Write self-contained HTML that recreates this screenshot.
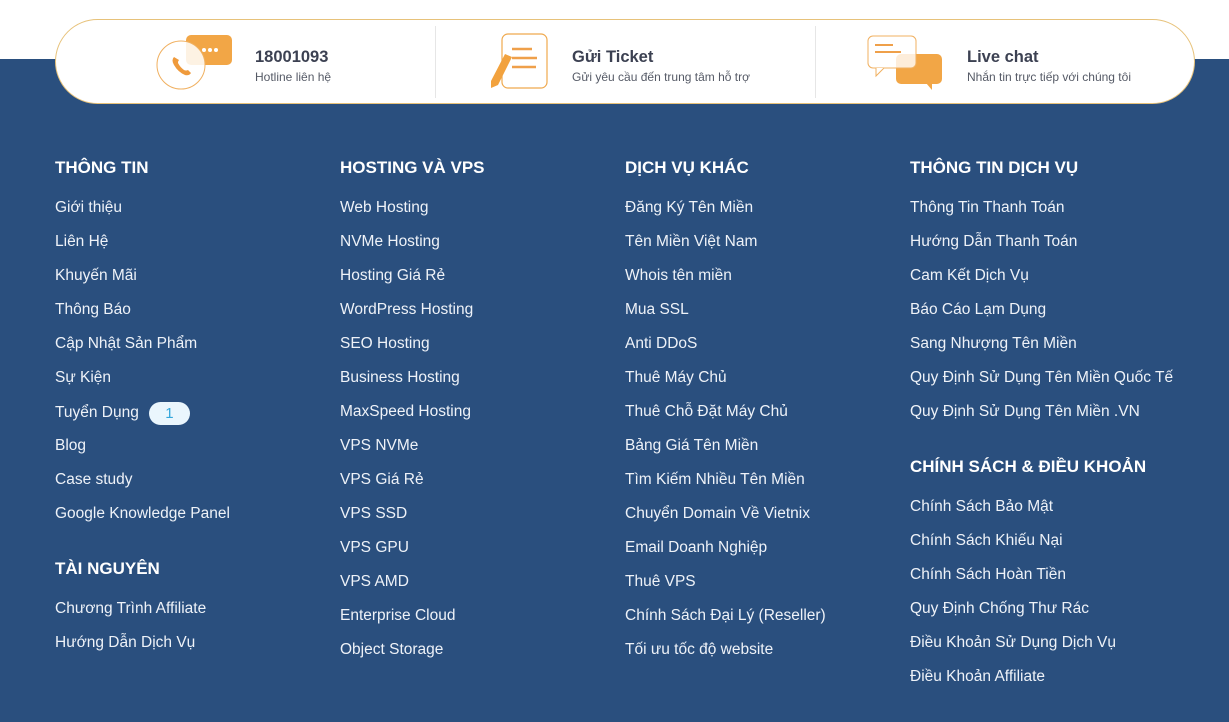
<!DOCTYPE html>
<html><head><meta charset="utf-8"><style>
*{margin:0;padding:0;box-sizing:border-box}
body{width:1229px;height:722px;overflow:hidden;background:#2a4f7e;font-family:"Liberation Sans",Arial,sans-serif;position:relative}
.top{position:absolute;left:0;top:0;width:1229px;height:59px;background:#fff}
.pill{position:absolute;left:55px;top:19px;width:1140px;height:85px;background:#fff;border:1px solid #e7c27a;border-radius:43px}
.div{position:absolute;top:6px;width:1px;height:72px;background:#e6e6e6}
.it{position:absolute;top:28px}
.it b{display:block;font-size:16.5px;color:#3c4152;font-weight:bold}
.it span{display:block;font-size:12px;color:#555a66;margin-top:3px}
.col{position:absolute;top:158px}
.col h3{font-size:17px;color:#fff;font-weight:bold;height:20px;line-height:20px;margin-bottom:20px}
.col a{display:block;color:#eef2f8;font-size:15.5px;height:34px;line-height:20px;text-decoration:none}
.badge{display:inline-block;width:41px;height:23px;border-radius:12px;background:#eaf6fd;color:#35a7dc;text-align:center;line-height:23px;font-size:15px;margin-left:10px;vertical-align:-1px}
</style></head><body>
<div class="top"></div>
<div class="pill">
 <div class="div" style="left:379px"></div>
 <div class="div" style="left:759px"></div>
 <svg style="position:absolute;left:100px;top:14px" width="80" height="58">
  <rect x="30" y="1" width="46" height="30" rx="5" fill="#f2a646"/>
  <circle cx="48" cy="16" r="2" fill="#fff"/><circle cx="54" cy="16" r="2" fill="#fff"/><circle cx="60" cy="16" r="2" fill="#fff"/>
  <circle cx="25" cy="31" r="24" fill="#fff" fill-opacity=".85" stroke="#f0b060" stroke-width="1"/>
  <path d="M18 23 q-3 3 0 8 q4 7 11 10 q4 1 6-2 l-3-3 q-2 1-4 0 q-4-3-6-7 q0-2 1-3 z" fill="#ef9a3c"/>
 </svg>
 <div class="it" style="left:199px"><b>18001093</b><span>Hotline liên hệ</span></div>
 <svg style="position:absolute;left:434px;top:12px" width="62" height="60">
  <rect x="12" y="2" width="45" height="54" rx="6" fill="#fff" stroke="#efa94e" stroke-width="1.2"/>
  <path d="M22 17h20M22 26h25M22 35h24" stroke="#efa04a" stroke-width="2.5"/>
  <path d="M15 22 l7 3 -14 28 -7 3 0-7z" fill="#f2a23e"/>
 </svg>
 <div class="it" style="left:516px"><b>Gửi Ticket</b><span>Gửi yêu cầu đến trung tâm hỗ trợ</span></div>
 <svg style="position:absolute;left:810px;top:14px" width="80" height="58">
  <rect x="30" y="20" width="46" height="30" rx="5" fill="#f2a646"/>
  <path d="M66 49 l0 7 -6-7z" fill="#f2a646"/>
  <rect x="2" y="2" width="48" height="32" rx="5" fill="#fff" fill-opacity=".8" stroke="#f0b060" stroke-width="1"/>
  <path d="M10 34 l0 8 8-8" fill="#fff" stroke="#f0b060"/>
  <path d="M9 11h18M9 18h26" stroke="#efa04a" stroke-width="2"/>
 </svg>
 <div class="it" style="left:911px"><b>Live chat</b><span>Nhắn tin trực tiếp với chúng tôi</span></div>
</div>

<div class="col" style="left:55px">
<h3>THÔNG TIN</h3>
<a>Giới thiệu</a><a>Liên Hệ</a><a>Khuyến Mãi</a><a>Thông Báo</a><a>Cập Nhật Sản Phẩm</a><a>Sự Kiện</a><a>Tuyển Dụng<span class="badge">1</span></a><a>Blog</a><a>Case study</a><a>Google Knowledge Panel</a>
<h3 style="margin-top:21px">TÀI NGUYÊN</h3>
<a>Chương Trình Affiliate</a><a>Hướng Dẫn Dịch Vụ</a>
</div>
<div class="col" style="left:340px">
<h3>HOSTING VÀ VPS</h3>
<a>Web Hosting</a><a>NVMe Hosting</a><a>Hosting Giá Rẻ</a><a>WordPress Hosting</a><a>SEO Hosting</a><a>Business Hosting</a><a>MaxSpeed Hosting</a><a>VPS NVMe</a><a>VPS Giá Rẻ</a><a>VPS SSD</a><a>VPS GPU</a><a>VPS AMD</a><a>Enterprise Cloud</a><a>Object Storage</a>
</div>
<div class="col" style="left:625px">
<h3>DỊCH VỤ KHÁC</h3>
<a>Đăng Ký Tên Miền</a><a>Tên Miền Việt Nam</a><a>Whois tên miền</a><a>Mua SSL</a><a>Anti DDoS</a><a>Thuê Máy Chủ</a><a>Thuê Chỗ Đặt Máy Chủ</a><a>Bảng Giá Tên Miền</a><a>Tìm Kiếm Nhiều Tên Miền</a><a>Chuyển Domain Về Vietnix</a><a>Email Doanh Nghiệp</a><a>Thuê VPS</a><a>Chính Sách Đại Lý (Reseller)</a><a>Tối ưu tốc độ website</a>
</div>
<div class="col" style="left:910px">
<h3>THÔNG TIN DỊCH VỤ</h3>
<a>Thông Tin Thanh Toán</a><a>Hướng Dẫn Thanh Toán</a><a>Cam Kết Dịch Vụ</a><a>Báo Cáo Lạm Dụng</a><a>Sang Nhượng Tên Miền</a><a>Quy Định Sử Dụng Tên Miền Quốc Tế</a><a>Quy Định Sử Dụng Tên Miền .VN</a>
<h3 style="margin-top:21px">CHÍNH SÁCH &amp; ĐIỀU KHOẢN</h3>
<a>Chính Sách Bảo Mật</a><a>Chính Sách Khiếu Nại</a><a>Chính Sách Hoàn Tiền</a><a>Quy Định Chống Thư Rác</a><a>Điều Khoản Sử Dụng Dịch Vụ</a><a>Điều Khoản Affiliate</a>
</div>
</body></html>
